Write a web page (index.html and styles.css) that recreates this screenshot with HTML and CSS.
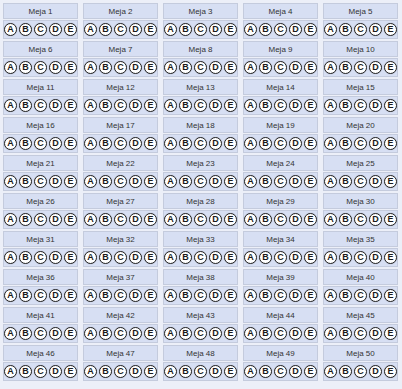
FILE: index.html
```html
<!DOCTYPE html>
<html>
<head>
<meta charset="utf-8">
<link rel="stylesheet" href="styles.css">
</head>
<body>
<div class="grid" id="grid"></div>
<script src="app.js"></script>
</body>
</html>
```

FILE: styles.css
```css
html, body {
  margin: 0;
  padding: 0;
  background: #eceff8;
}
.grid {
  display: grid;
  grid-template-columns: repeat(5, 75px);
  column-gap: 5px;
  row-gap: 2px;
  padding: 3px 0 0 3px;
}
.cell {
  display: flex;
  flex-direction: column;
  gap: 1px;
}
.head {
  height: 14px;
  border: 1px solid #c4cbdd;
  background: #d7dff3;
  font-family: "Liberation Sans", Arial, sans-serif;
  font-size: 8px;
  color: #333;
  display: flex;
  align-items: center;
  justify-content: center;
}
.body {
  height: 17px;
  border: 1px solid #c4cbdd;
  background: #d7dff3;
  display: flex;
  align-items: center;
  justify-content: center;
  gap: 2px;
}
.opt {
  width: 11px;
  height: 11px;
  border: 1px solid #222;
  border-radius: 50%;
  background: #fff;
  box-shadow: 0 0 1px 0 #9aa0b0;
  font-family: "Liberation Sans", Arial, sans-serif;
  font-size: 9px;
  font-weight: bold;
  color: #1a1a1a;
  display: flex;
  align-items: center;
  justify-content: center;
  line-height: 1;
}
```

FILE: app.js
```js
var g = document.getElementById('grid');
for (var i = 1; i <= 50; i++) {
  var c = document.createElement('div');
  c.className = 'cell';
  var h = document.createElement('div');
  h.className = 'head';
  h.textContent = 'Meja ' + i;
  var b = document.createElement('div');
  b.className = 'body';
  'ABCDE'.split('').forEach(function (l) {
    var o = document.createElement('div');
    o.className = 'opt';
    o.textContent = l;
    b.appendChild(o);
  });
  c.appendChild(h);
  c.appendChild(b);
  g.appendChild(c);
}
```
